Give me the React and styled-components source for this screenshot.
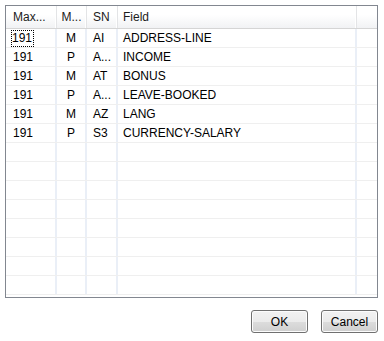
import React from "react";
import styled, { createGlobalStyle } from "styled-components";

const GlobalStyle = createGlobalStyle`
  html, body {
    margin: 0;
    padding: 0;
    background: #ffffff;
  }
  body {
    font-family: "Liberation Sans", Arial, sans-serif;
    font-size: 12px;
    color: #000;
  }
`;

const COLUMNS = [
  { key: "max", title: "Max...", width: 51, align: "left", pad: 7 },
  { key: "m", title: "M...", width: 30, align: "center", pad: 0 },
  { key: "sn", title: "SN", width: 31, align: "left", pad: 6 },
  { key: "field", title: "Field", width: 239, align: "left", pad: 5 },
];

const ROWS = [
  { max: "191", m: "M", sn: "AI", field: "ADDRESS-LINE" },
  { max: "191", m: "P", sn: "A...", field: "INCOME" },
  { max: "191", m: "M", sn: "AT", field: "BONUS" },
  { max: "191", m: "P", sn: "A...", field: "LEAVE-BOOKED" },
  { max: "191", m: "M", sn: "AZ", field: "LANG" },
  { max: "191", m: "P", sn: "S3", field: "CURRENCY-SALARY" },
];

const TOTAL_ROWS = 14;

const Dialog = styled.div`
  width: 384px;
  height: 341px;
  box-sizing: border-box;
  padding: 5px 6px 0 5px;
  display: flex;
  flex-direction: column;
`;

const ListPanel = styled.div`
  height: 293px;
  box-sizing: border-box;
  border: 1px solid #828790;
  overflow: hidden;
  background: #fff;
`;

const HeaderRow = styled.div`
  display: flex;
  height: 23px;
  box-sizing: border-box;
  border-bottom: 1px solid #d5d5d5;
  background: linear-gradient(#ffffff 0%, #ffffff 40%, #f1f2f4 100%);
`;

const HeaderCell = styled.div`
  width: ${(p) => p.$width}px;
  flex: ${(p) => (p.$fill ? "1" : "none")};
  box-sizing: border-box;
  padding-left: ${(p) => p.$pad}px;
  padding-top: 1px;
  text-align: ${(p) => p.$align};
  line-height: 21px;
  white-space: nowrap;
  overflow: hidden;
  color: #1c1c1c;
  border-right: ${(p) => (p.$fill ? "none" : "1px solid #e3e4e6")};
  box-shadow: ${(p) => (p.$fill ? "none" : "inset -1px 0 0 #ffffff")};
`;

const Row = styled.div`
  display: flex;
  height: 19px;
  box-sizing: border-box;
  border-bottom: 1px solid #efefef;
`;

const Cell = styled.div`
  width: ${(p) => p.$width}px;
  flex: ${(p) => (p.$fill ? "1" : "none")};
  box-sizing: border-box;
  padding-left: ${(p) => p.$pad}px;
  padding-top: 1px;
  text-align: ${(p) => p.$align};
  line-height: 17px;
  white-space: nowrap;
  overflow: hidden;
  border-right: ${(p) => (p.$fill ? "none" : "2px solid #eaeff7")};
`;

const FocusText = styled.span`
  display: inline-block;
  vertical-align: top;
  height: 17px;
  line-height: 17px;
  box-sizing: border-box;
  padding: 0 2px 0 1px;
  margin-left: -2px;
  outline: 1px dotted #000;
  outline-offset: -1px;
`;

const ButtonBar = styled.div`
  display: flex;
  justify-content: flex-end;
  gap: 13px;
  margin-top: 12px;
`;

const Button = styled.button`
  width: 57px;
  height: 23px;
  box-sizing: border-box;
  border: 1px solid #707070;
  border-radius: 3px;
  background: linear-gradient(#f2f2f2 0%, #ebebeb 50%, #dddddd 50%, #cfcfcf 100%);
  box-shadow: inset 0 0 0 1px #fcfcfc;
  font-family: "Liberation Sans", Arial, sans-serif;
  font-size: 12px;
  color: #000;
  padding: 0;
`;

export default function App() {
  const blank = Array.from({ length: TOTAL_ROWS - ROWS.length });
  return (
    <>
      <GlobalStyle />
      <Dialog>
        <ListPanel>
          <HeaderRow>
            {COLUMNS.map((c) => (
              <HeaderCell key={c.key} $width={c.width} $pad={c.pad} $align={c.align}>
                {c.title}
              </HeaderCell>
            ))}
            <HeaderCell $fill $pad={0} $align="left" />
          </HeaderRow>
          {ROWS.map((r, i) => (
            <Row key={i}>
              {COLUMNS.map((c) => (
                <Cell key={c.key} $width={c.width} $pad={c.pad} $align={c.align}>
                  {i === 0 && c.key === "max" ? <FocusText>{r[c.key]}</FocusText> : r[c.key]}
                </Cell>
              ))}
              <Cell $fill $pad={0} $align="left" />
            </Row>
          ))}
          {blank.map((_, i) => (
            <Row key={"b" + i}>
              {COLUMNS.map((c) => (
                <Cell key={c.key} $width={c.width} $pad={c.pad} $align={c.align} />
              ))}
              <Cell $fill $pad={0} $align="left" />
            </Row>
          ))}
        </ListPanel>
        <ButtonBar>
          <Button>OK</Button>
          <Button>Cancel</Button>
        </ButtonBar>
      </Dialog>
    </>
  );
}
